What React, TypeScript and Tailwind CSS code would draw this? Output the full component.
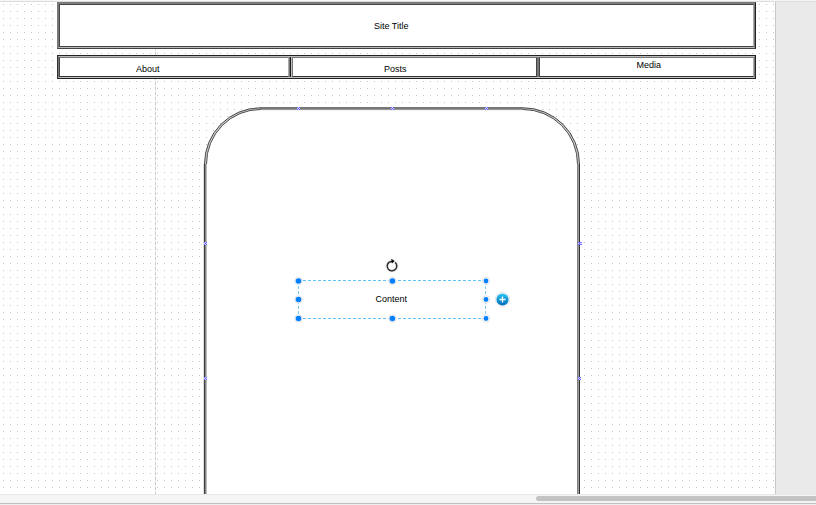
import type { ReactNode } from "react";

function Label({ className, children }: { className: string; children: ReactNode }) {
  return (
    <span className={`absolute whitespace-nowrap text-[9px] leading-[12px] text-black ${className}`}>
      {children}
    </span>
  );
}

function DeviceFrame() {
  return (
    <svg className="absolute left-0 top-0" width="776" height="494" fill="none">
      <path d="M204.500 510V164A56 56.500 0 0 1 260.500 107.500H523A56.500 56.500 0 0 1 579.500 164V510Z" fill="#fff" />
      <path d="M205.500 164A55 55.500 0 0 1 260.500 108.500M523 108.500A55.500 55.500 0 0 1 578.500 164" stroke="#ccc" strokeWidth="2" />
      <path d="M260 107.500H523M260 108.500H523" stroke="#777" />
      <path d="M260 109.500H523" stroke="#999" />
      <path d="M260 110.500H523" stroke="#f1f1f1" />
      <path d="M203.500 164V494" stroke="#ddd" />
      <path d="M204.500 164V494" stroke="#404040" />
      <path d="M205.500 164V494" stroke="#858585" />
      <path d="M206.500 164V494" stroke="#bbb" />
      <path d="M577.500 164V494" stroke="#858585" />
      <path d="M578.500 164V494" stroke="#999" />
      <path d="M579.500 164V494" stroke="#333" />
      <path d="M204.500 164A56 56.200 0 0 1 260.500 107.800M523 107.800A56.500 56.200 0 0 1 579.500 164M206.500 164A54 54.500 0 0 1 260.500 109.500M523 109.500A54.500 54.500 0 0 1 577.500 164" stroke="#444" strokeWidth=".95" />
      {[[298, 108], [392, 108], [486, 108], [205, 243], [205, 378], [579, 243], [579, 378]].map(([x, y]) => (
        <g key={`${x}-${y}`} transform={`translate(${x} ${y})`}>
          <path d="M-1 -1H2V2H-1Z" fill="#d9d9ff" />
          <path d="M-1 -1L2 2M2 -1L-1 2" stroke="#4a42ff" strokeWidth=".8" />
        </g>
      ))}
      <path d="M578 242.500H582M578 244.500H582" stroke="#7772ff" />
    </svg>
  );
}

function Selection() {
  return (
    <svg className="absolute left-[280px] top-[250px]" width="240" height="80" fill="none">
      <defs>
        <linearGradient id="add" x2="0" y2="1">
          <stop stopColor="#2dc5f6" />
          <stop offset="1" stopColor="#006bb6" />
        </linearGradient>
      </defs>
      <path d="M18 30.500H206M18 68.500H206" stroke="#62c3fa" strokeDasharray="3 2" />
      <path d="M18.500 31V68M205.500 31V68" stroke="#75cbfa" strokeDasharray="3 2" />
      {[[18.500, 31], [112.400, 31], [206, 31], [18.500, 49.500], [206, 49.500], [18.500, 68.500], [112.400, 68.500], [206, 68.500]].map(([x, y]) => (
        <g key={`${x}-${y}`}>
          <circle cx={x} cy={y} r="3.700" fill="#fff" stroke="#dadada" strokeWidth=".8" />
          <circle cx={x} cy={y} r={x === 206 ? 2.4 : 2.8} fill="#007fff" />
        </g>
      ))}
      <circle cx="112" cy="16" r="4.800" stroke="#e3e3e3" strokeWidth="3" />
      <path d="M115.200 12.500A4.800 4.800 0 1 1 109.300 12.100L112.400 11.300" stroke="#222" strokeWidth="1.300" />
      <path d="M111.200 8.800L114.600 10.900L111.900 13.400Z" fill="#000" />
      <circle cx="222.500" cy="49.500" r="7.100" fill="#fff" stroke="#dedede" strokeWidth=".8" />
      <circle cx="222.500" cy="49.500" r="6.100" fill="url(#add)" />
      <path d="M219.500 49.500H225.500M222.500 46.500V52.500" stroke="#fff" strokeWidth="1.300" />
    </svg>
  );
}

export default function App() {
  return (
    <div className="flex h-[505px] w-[816px] flex-col overflow-hidden bg-[#ebebeb] font-['Liberation_Sans',sans-serif]">
      <main className="relative flex h-[494px] shrink-0">
        <section className="w-[775px] shrink-0 bg-white bg-[radial-gradient(circle_at_3.5px_4.5px,#c4c4c4_0.6px,transparent_0.7px)] bg-[length:7px_7px]" />
        <aside className="grow border-l border-[#c8c8c8] bg-[#eaeaea]" />
        <div className="absolute left-0 top-0 h-[2px] w-full border-b border-[#dedede] bg-[#f6f6f6]" />
        <div className="absolute left-[155px] top-[2px] h-[492px] w-px bg-[repeating-linear-gradient(to_bottom,#ccc_0_3px,#eee_3px_5px)]" />

        <div className="absolute left-[57px] top-[2px] h-[47px] w-[699px] border border-b-[#444] border-l-[#777] border-r-[#222] border-t-[#777] bg-white">
          <div className="h-full border border-b-[#bbb] border-l-[#777] border-r-[#777] border-t-[#808080]">
            <div className="h-full border border-b-[#444] border-l-[#444] border-r-[#aaa] border-t-[#444]" />
          </div>
        </div>
        <Label className="left-[374px] top-[20px]">Site Title</Label>

        <nav className="absolute left-[57px] top-[55px] flex h-[24px] w-[699px] border border-b-[#222] border-l-[#333] border-r-[#222] border-t-[#222] bg-white">
          <div className="flex h-full w-full border border-b-[#c4c4c4] border-l-[#777] border-r-[#777] border-t-[#bbb]">
            <div className="w-[230px] border border-b-[#333] border-l-[#444] border-r-[#aaa] border-t-[#777]" />
            <div className="w-px bg-[#777]" />
            <div className="w-px bg-[#181818]" />
            <div className="w-px bg-[#c0c0c0]" />
            <div className="w-[245px] border border-b-[#333] border-l-[#777] border-r-[#444] border-t-[#777]" />
            <div className="w-[2px] bg-[#777]" />
            <div className="grow border border-b-[#333] border-l-[#444] border-r-[#aaa] border-t-[#777]" />
          </div>
        </nav>
        <Label className="left-[136px] top-[63px]">About</Label>
        <Label className="left-[384px] top-[63px]">Posts</Label>
        <Label className="left-[636.500px] top-[59px]">Media</Label>

        <DeviceFrame />
        <Selection />
        <Label className="left-[375.500px] top-[293px]">Content</Label>
      </main>
      <footer className="flex h-[11px] flex-col border-t border-[#e7e7e7] bg-[#f5f5f5]">
        <div className="flex h-[8px] justify-end pb-[2px] pt-px">
          <div className="w-[280px] rounded-l-full bg-[#c3c3c3]" />
        </div>
        <div className="h-px bg-[#c0c0c0]" />
        <div className="h-px bg-[#eee]" />
      </footer>
    </div>
  );
}
